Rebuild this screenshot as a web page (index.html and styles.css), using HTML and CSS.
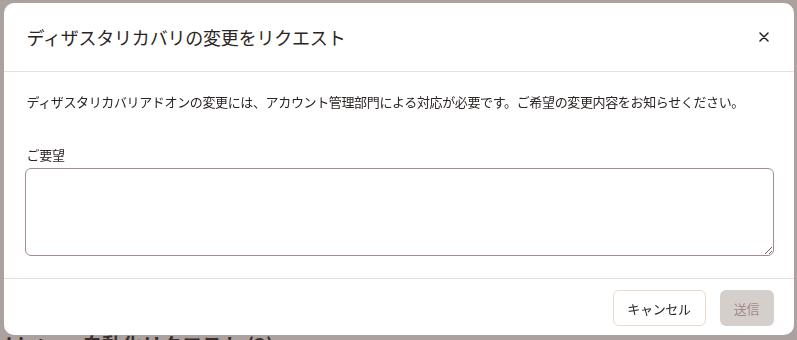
FILE: index.html
```html
<!DOCTYPE html>
<html lang="ja">
<head>
<meta charset="utf-8">
<link rel="stylesheet" href="styles.css">
</head>
<body>
<div class="page">
  <h2 class="page-title">kintone自動化リクエスト (3)</h2>
</div>
<div class="overlay">
  <div class="modal">
    <div class="modal-header">
      <h1 class="modal-title">ディザスタリカバリの変更をリクエスト</h1>
      <button class="close-btn" aria-label="閉じる">
        <svg width="10" height="10" viewBox="0 0 10 10"><path d="M1 1L9 9M9 1L1 9" stroke="#222" stroke-width="1.5" stroke-linecap="round"/></svg>
      </button>
    </div>
    <div class="modal-body">
      <p class="desc">ディザスタリカバリアドオンの変更には、アカウント管理部門による対応が必要です。ご希望の変更内容をお知らせください。</p>
      <label class="label" for="req">ご要望</label>
      <textarea id="req" class="textarea"></textarea>
    </div>
    <div class="modal-footer">
      <button class="btn btn-cancel">キャンセル</button>
      <button class="btn btn-send" disabled>送信</button>
    </div>
  </div>
</div>
</body>
</html>
```

FILE: styles.css
```css
* { box-sizing: border-box; }
html, body {
  margin: 0;
  padding: 0;
  width: 797px;
  height: 340px;
  overflow: hidden;
  font-family: "Noto Sans CJK JP", "Noto Sans", sans-serif;
  color: #2b2523;
  background: #f6f3f1;
}
.page {
  height: 340px;
  overflow: hidden;
  padding: 331px 0 0 6px;
}
.page-title {
  margin: 0;
  font-size: 20px;
  font-weight: 700;
  color: #2b2523;
  line-height: 28px;
  white-space: nowrap;
}
.overlay {
  position: fixed;
  inset: 0;
  background: rgba(80, 62, 58, 0.45);
  display: flex;
  justify-content: center;
  align-items: flex-start;
  padding-top: 3px;
}
.modal {
  width: 790px;
  background: #fff;
  border-radius: 10px;
  display: flex;
  flex-direction: column;
}
.modal-header {
  display: flex;
  align-items: center;
  justify-content: space-between;
  padding: 0 25px 0 23px;
  height: 69px;
  border-bottom: 1px solid #ecdfd3;
}
.modal-title {
  margin: 0;
  font-size: 18px;
  font-weight: 400;
  color: #2b2523;
  letter-spacing: -0.2px;
}
.close-btn {
  border: 0;
  background: none;
  padding: 0;
  width: 10px;
  height: 10px;
  display: flex;
  align-items: center;
  justify-content: center;
  cursor: pointer;
}
.modal-body {
  padding: 20px 20px 22px 21px;
  display: flex;
  flex-direction: column;
}
.desc {
  margin: 0 0 34px 2px;
  font-size: 13px;
  line-height: 20px;
  color: #2b2523;
  letter-spacing: -0.36px;
  white-space: nowrap;
}
.label {
  font-size: 13px;
  line-height: 18px;
  margin: 0 0 4px 2px;
  color: #2b2523;
  letter-spacing: -0.3px;
}
.textarea {
  width: 100%;
  height: 88px;
  border: 1px solid #a38d88;
  border-radius: 6px;
  resize: vertical;
  font-family: inherit;
  font-size: 13px;
  padding: 8px 10px;
}
.modal-footer {
  border-top: 1px solid #ecdfd3;
  display: flex;
  justify-content: flex-end;
  gap: 14px;
  padding: 11px 20px 9px 20px;
}
.btn {
  height: 36px;
  border-radius: 6px;
  font-family: inherit;
  font-size: 13px;
  padding: 0;
  white-space: nowrap;
  letter-spacing: -0.3px;
}
.btn-cancel {
  width: 93px;
  background: #fff;
  border: 1px solid #ead9cc;
  color: #2b2523;
}
.btn-send {
  width: 54px;
  background: #d5cfcc;
  border: 0;
  color: #9f8a86;
}
```
